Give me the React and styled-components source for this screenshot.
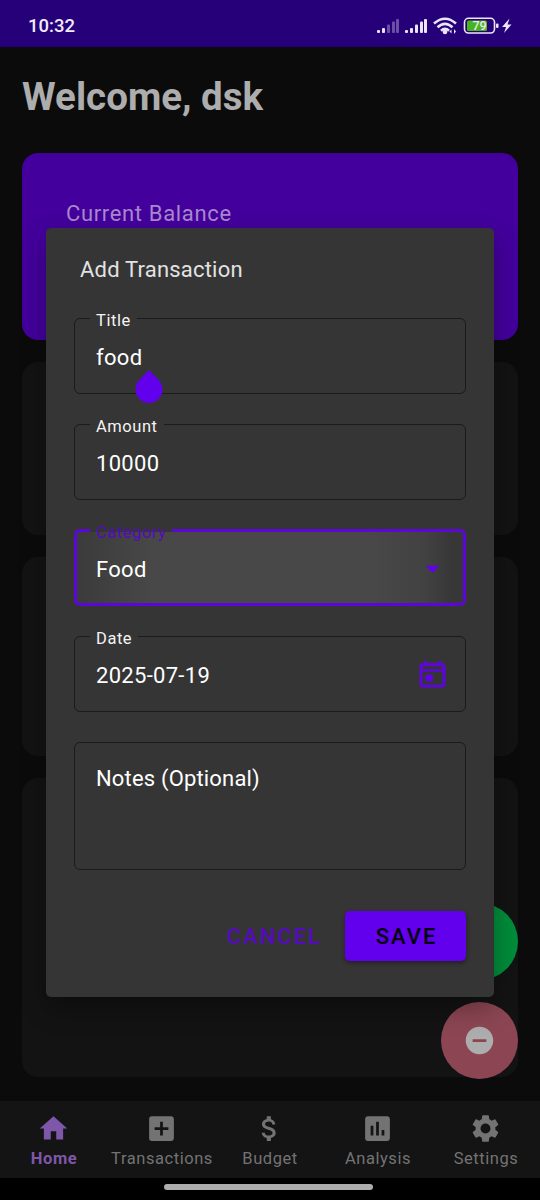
import React from "react";
import styled, { createGlobalStyle } from "styled-components";
import { MdHome, MdAddBox, MdAttachMoney, MdAssessment, MdSettings, MdRemoveCircle } from "react-icons/md";

const GlobalStyle = createGlobalStyle`
  * { box-sizing: border-box; }
  body { margin: 0; background: #000; font-family: Roboto, sans-serif; }
`;

const Screen = styled.div`
  position: relative;
  width: 540px;
  height: 1200px;
  overflow: hidden;
  display: flex;
  flex-direction: column;
  background: #0b0b0b;
`;

const StatusBar = styled.header`
  height: 47px;
  flex: none;
  padding: 4px 28px 0;
  display: flex;
  align-items: center;
  justify-content: space-between;
  background: #260078;
  color: #f1eafa;
`;

const Clock = styled.span`
  font-size: 18.5px;
  font-weight: 500;
  line-height: 22px;
`;

const StatusIcons = styled.svg`
  display: block;
  width: 138px;
  height: 22px;
  margin-right: -1px;
`;

const Content = styled.main`
  flex: 1;
  min-height: 0;
  padding: 27px 22px 0;
`;

const Greeting = styled.h1`
  margin: 0 0 34px;
  font-size: 38.5px;
  line-height: 45px;
  font-weight: 700;
  color: #adadad;
`;

const BalanceCard = styled.section`
  height: 187px;
  border-radius: 16px;
  padding: 47px 44px;
  background: #43009c;
`;

const BalanceLabel = styled.div`
  font-size: 22px;
  line-height: 28px;
  letter-spacing: 0.65px;
  color: #a888cb;
`;

const Panel = styled.section`
  height: ${(p) => p.$height}px;
  margin-top: 22px;
  border-radius: 16px;
  background: #131313;
`;

const NavBar = styled.nav`
  height: 77px;
  flex: none;
  display: grid;
  grid-template-columns: repeat(5, 1fr);
  background: #141414;
`;

const NavItem = styled.div`
  display: flex;
  flex-direction: column;
  align-items: center;
  padding-top: 11px;
  color: ${(p) => (p.$active ? "#7f57aa" : "#737373")};
  font-size: 16.5px;
  font-weight: ${(p) => (p.$active ? 700 : 400)};
  line-height: 20px;
  letter-spacing: 0.55px;
  white-space: nowrap;
  svg { width: 33px; height: 33px; margin: 0 1px 4px 0; }
`;

const GestureArea = styled.footer`
  height: 22px;
  flex: none;
  display: flex;
  justify-content: center;
  padding: 6px 0 0;
  background: #000;
`;

const GesturePill = styled.div`
  width: 209px;
  height: 6px;
  border-radius: 3px;
  background: #adadad;
  margin-right: 4px;
`;

const Fab = styled.div`
  position: absolute;
  right: 22px;
  top: ${(p) => p.$top}px;
  width: 77px;
  height: 77px;
  border-radius: 50%;
  display: flex;
  align-items: center;
  justify-content: center;
  background: ${(p) => p.$color};
  color: #adadad;
  svg { width: 33px; height: 33px; }
`;

const Dialog = styled.div`
  position: absolute;
  left: 46px;
  top: 228px;
  width: 448px;
  height: 769px;
  padding: 26px 28px 0;
  border-radius: 5px;
  background: #353535;
  box-shadow: 0 12px 26px rgba(0, 0, 0, 0.3);
`;

const DialogTitle = styled.h2`
  margin: 0 0 24px;
  padding-left: 6px;
  font-size: 22px;
  line-height: 32px;
  font-weight: 400;
  letter-spacing: 0.2px;
  color: #e2e2e2;
`;

const Field = styled.fieldset`
  position: relative;
  min-width: 0;
  width: 392px;
  height: 84px;
  margin: 0 0 22px;
  padding: 0 ${(p) => (p.$focused ? 14 : 16)}px 0 ${(p) => (p.$focused ? 19 : 21)}px;
  border: ${(p) => (p.$focused ? "3px solid #5d06da" : "1px solid #1b1b1b")};
  border-radius: 6px;
  ${(p) => p.$focused && "background: linear-gradient(90deg, #3b3b3b 0%, #484848 20%, #484848 76%, #424242 90%, #373737 97%);"}
`;

const Legend = styled.legend`
  height: 17px;
  margin-left: -6px;
  padding: 0 6px;
  font-size: 16.5px;
  line-height: 21px;
  letter-spacing: 0.55px;
  color: ${(p) => (p.$focused ? "#540abb" : "#f4f4f4")};
`;

const FieldBody = styled.div`
  display: flex;
  align-items: center;
  justify-content: space-between;
  height: 32px;
  margin-top: 15px;
  font-size: 22px;
  line-height: 32px;
  letter-spacing: 0.3px;
  color: #fff;
  svg { margin-bottom: 4px; }
`;

const NotesField = styled.div`
  height: 128px;
  margin-top: 30px;
  padding: 20px 21px;
  border: 1px solid #1b1b1b;
  border-radius: 6px;
  font-size: 22px;
  line-height: 32px;
  letter-spacing: 0.17px;
  color: #fff;
`;

const CursorHandle = styled.svg`
  position: absolute;
  left: 60px;
  top: 43px;
  width: 28px;
  height: 34px;
  z-index: 1;
`;

const Actions = styled.div`
  display: flex;
  justify-content: flex-end;
  align-items: center;
  gap: 23px;
  margin-top: 41px;
`;

const TextButton = styled.button`
  border: 0;
  height: 50px;
  padding: 2px 0 0;
  background: none;
  font: 500 22px/48px Roboto, sans-serif;
  letter-spacing: 2px;
  color: #560abf;
`;

const SolidButton = styled(TextButton)`
  width: 121px;
  padding-left: 2px;
  border-radius: 5px;
  background: #6200ee;
  color: #06000f;
  box-shadow: 0 2px 4px rgba(0, 0, 0, 0.4);
`;

const ArrowIcon = () => (
  <svg width="33" height="33" viewBox="0 0 24 24" fill="#6200ee"><path d="M7 10l5 5 5-5z" /></svg>
);

const CalendarIcon = () => (
  <svg width="33" height="33" viewBox="0 0 33 33" fill="none">
    <rect x="5" y="6.700" width="23" height="21.300" rx="2" stroke="#5c07d6" strokeWidth="3.200" />
    <path d="M5 12.500h23" stroke="#5c07d6" strokeWidth="2.600" />
    <path d="M9.500 3v4M23.500 3v4" stroke="#5c07d6" strokeWidth="3" />
    <rect x="9.500" y="16.500" width="7.500" height="7" rx="2" fill="#6200ee" />
  </svg>
);

const nav = [
  ["Home", MdHome],
  ["Transactions", MdAddBox],
  ["Budget", MdAttachMoney],
  ["Analysis", MdAssessment],
  ["Settings", MdSettings],
];

const signalBars = [
  [0, 15, 3],
  [5, 13, 5],
  [10, 9.5, 8.5],
  [15, 6.5, 11.5],
  [19, 4, 14],
];

function SystemIcons() {
  return (
    <StatusIcons viewBox="0 0 138 22" fill="#ece4f8">
      {signalBars.map(([x, y, h], i) => (
        <React.Fragment key={x}>
          <rect x={x + 2} y={y} width="3" height={h} rx="1" opacity={i > 1 ? 0.35 : 1} />
          <rect x={x + 30} y={y} width="3" height={h} rx="1" />
        </React.Fragment>
      ))}
      <g fill="none" stroke="#ece4f8" strokeWidth="2.6">
        <path d="M59 8.500Q70 -1 81 8.500M62.500 12.300Q70 5.500 77.500 12.300M66 15.700Q70 12 74 15.700" />
      </g>
      <circle cx="70" cy="17" r="2.300" />
      <path d="M74.500 16.500l2-2v4zM79 19v-5l2 2.500z" />
      <rect x="89.500" y="3.300" width="30" height="14.700" rx="4" fill="none" stroke="#ece4f8" strokeWidth="1.600" />
      <rect x="92" y="5.500" width="20" height="10.500" rx="1.500" fill="#45b51b" />
      <rect x="121" y="8.500" width="2.500" height="4.500" rx="1" />
      <text x="104.500" y="15.300" textAnchor="middle" fontSize="12.500" fontWeight="500">79</text>
      <path d="M134.500 3.500L127 12h4l-2 6 7.500-8.500h-4z" />
    </StatusIcons>
  );
}

export default function App() {
  return (
    <>
      <GlobalStyle />
      <Screen>
        <StatusBar>
          <Clock>10:32</Clock>
          <SystemIcons />
        </StatusBar>
        <Content>
          <Greeting>Welcome, dsk</Greeting>
          <BalanceCard>
            <BalanceLabel>Current Balance</BalanceLabel>
          </BalanceCard>
          <Panel $height={173} />
          <Panel $height={199} />
          <Panel $height={299} />
        </Content>
        <NavBar>
          {nav.map(([label, Icon], i) => (
            <NavItem key={label} $active={i === 0}>
              <Icon />
              {label}
            </NavItem>
          ))}
        </NavBar>
        <GestureArea><GesturePill /></GestureArea>
        <Fab $top={903} $color="#008c3a" />
        <Fab $top={1002} $color="#8c4653"><MdRemoveCircle /></Fab>
        <Dialog>
          <DialogTitle>Add Transaction</DialogTitle>
          <Field>
            <Legend>Title</Legend>
            <FieldBody>food</FieldBody>
            <CursorHandle viewBox="0 0 28 34">
              <path d="M14 0L23.700 10A13.500 13.500 0 1 1 4.300 10Z" fill="#6200ee" />
            </CursorHandle>
          </Field>
          <Field>
            <Legend>Amount</Legend>
            <FieldBody>10000</FieldBody>
          </Field>
          <Field $focused>
            <Legend $focused>Category</Legend>
            <FieldBody>Food<ArrowIcon /></FieldBody>
          </Field>
          <Field>
            <Legend>Date</Legend>
            <FieldBody>2025-07-19<CalendarIcon /></FieldBody>
          </Field>
          <NotesField>Notes (Optional)</NotesField>
          <Actions>
            <TextButton>CANCEL</TextButton>
            <SolidButton>SAVE</SolidButton>
          </Actions>
        </Dialog>
      </Screen>
    </>
  );
}
